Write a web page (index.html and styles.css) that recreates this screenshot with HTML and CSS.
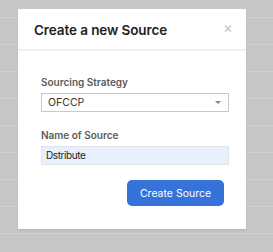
FILE: index.html
```html
<!DOCTYPE html>
<html lang="en">
<head>
    <meta charset="utf-8">
    <link rel="stylesheet" href="styles.css">
</head>
<body>
    <div class="backdrop">
        <div class="rows">
            <div class="row first"></div>
            <div class="row"></div>
            <div class="row"></div>
            <div class="row"></div>
            <div class="row"></div>
            <div class="row"></div>
            <div class="row"></div>
            <div class="row"></div>
            <div class="row"></div>
        </div>

        <div class="modal">
            <div class="modal-header">
                <h3>Create a new Source</h3>
                <span class="close">&times;</span>
            </div>
            <div class="modal-body">
                <label class="field-label">Sourcing Strategy</label>
                <div class="select">
                    <span>OFCCP</span>
                    <span class="caret"></span>
                </div>
                <label class="field-label">Name of Source</label>
                <div class="input">Dstribute</div>
                <div class="actions">
                    <button class="btn-primary">Create Source</button>
                </div>
            </div>
        </div>
    </div>
</body>
</html>
```
FILE: styles.css
```css
html, body { margin: 0; padding: 0; }
body { font-family: Inter, "Liberation Sans", sans-serif; background: #c7c7c7; }

.backdrop { position: relative; width: 273px; height: 252px; overflow: hidden; background: #c7c7c7; }
.rows .row { height: 26px; border-bottom: 1px solid #d0d0d0; }
.rows .row.first { height: 17px; }

.modal { position: absolute; left: 18px; top: 9px; width: 228px; height: 220px; background: #fff; box-shadow: 0 2px 2px rgba(0,0,0,0.08); }
.modal-header { display: flex; align-items: center; justify-content: space-between; height: 40px; padding: 0 13px 0 16px; border-bottom: 2px solid #f0f0f0; }
.modal-header h3 { margin: 0; font-size: 13.5px; font-weight: 600; color: #222; letter-spacing: -0.1px; padding-top: 2px; }
.close { color: #c4c4c4; font-size: 15px; line-height: 1; margin-top: -4px; }

.modal-body { padding: 25px 17px 0 23px; }
.field-label { display: block; font-size: 10px; line-height: 12px; font-weight: 600; color: #5a5a5a; margin-bottom: 5px; }
.select { display: flex; align-items: center; justify-content: space-between; height: 17px; border: 1px solid #c8c8c8; padding: 0 7px 0 6px; font-size: 10.5px; color: #333; margin-bottom: 17px; }
.caret { width: 0; height: 0; border-left: 3px solid transparent; border-right: 3px solid transparent; border-top: 3px solid #888; }
.input { height: 17px; line-height: 17px; background: #e8f0fe; border: 1px solid #e0e4ea; padding: 0 4px; font-size: 10px; color: #222; letter-spacing: -0.4px; }

.actions { display: flex; justify-content: flex-end; padding: 15px 5px 0 0; }
.btn-primary { width: 97px; height: 26px; border: 0; border-radius: 5px; background: #3573d8; color: #fff; font-family: inherit; font-size: 10.5px; }
```
